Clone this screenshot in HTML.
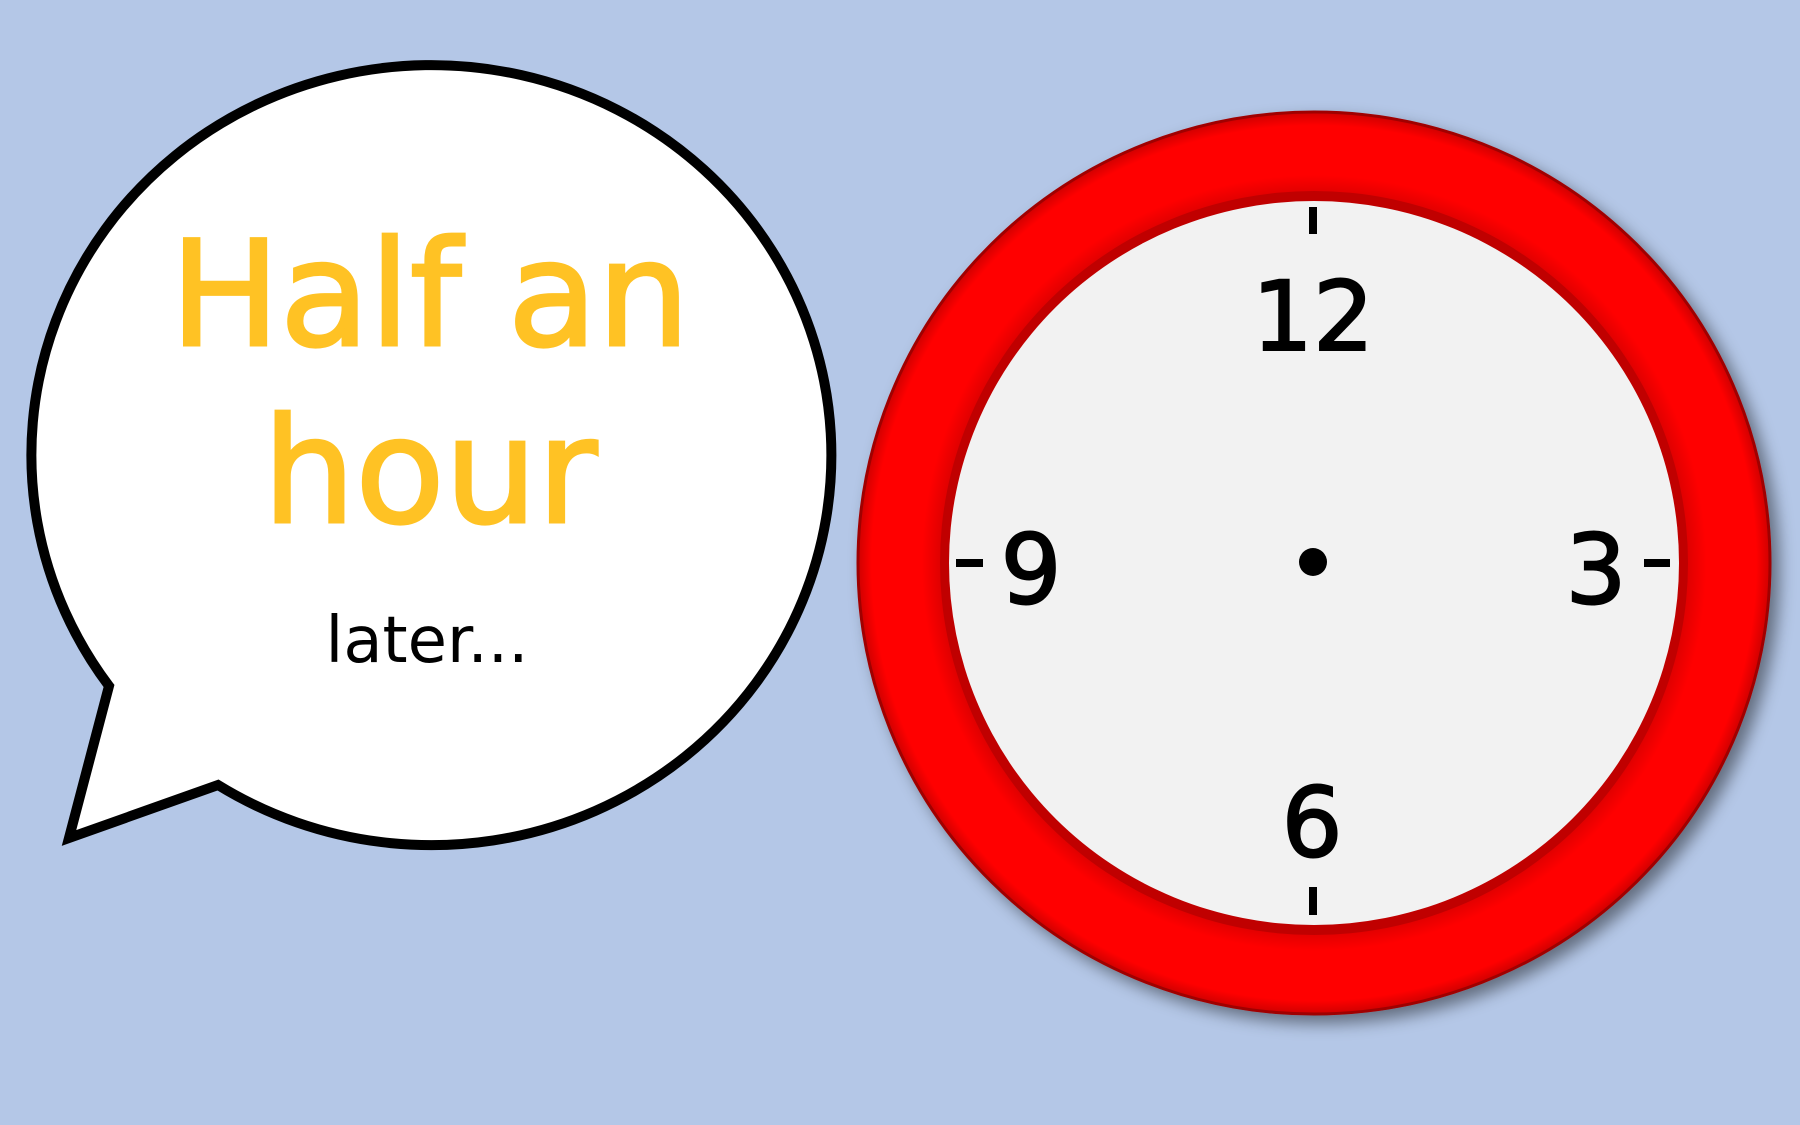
<!DOCTYPE html>
<html><head><meta charset="utf-8"><style>
html,body{margin:0;padding:0;background:#b4c7e7;width:1800px;height:1125px;overflow:hidden}
svg{display:block}
</style></head><body>
<svg width="1800" height="1125" viewBox="0 0 1800 1125">
<defs>
<filter id="sh" x="-10%" y="-10%" width="130%" height="130%"><feDropShadow dx="8" dy="8" stdDeviation="8" flood-color="#000" flood-opacity="0.45"/></filter>
<radialGradient id="rg" cx="50%" cy="50%" r="50%">
<stop offset="82%" stop-color="#e00000"/><stop offset="86%" stop-color="#ff0505"/><stop offset="97%" stop-color="#ff0000"/><stop offset="100%" stop-color="#d00000"/>
</radialGradient>
</defs>
<path d="M109,686 L69,838 L218,785 A400,390 0 1 0 109,686 Z" fill="#fff" stroke="#000" stroke-width="10" stroke-linejoin="miter"/>
<g font-family="'Comic Sans MS','DejaVu Sans',sans-serif" text-anchor="middle">
<text x="430" y="345" font-size="146" fill="#ffc224" stroke="#ffc224" stroke-width="3">Half an</text>
<text x="430" y="522" font-size="146" fill="#ffc224" stroke="#ffc224" stroke-width="3">hour</text>
<text x="427" y="662" font-size="64" fill="#000">later...</text>
</g>
<ellipse cx="1314" cy="563" rx="456" ry="451" fill="url(#rg)" stroke="#a00000" stroke-width="3" filter="url(#sh)"/>
<ellipse cx="1314" cy="563" rx="374" ry="372" fill="#c00000"/>
<ellipse cx="1314" cy="563" rx="365" ry="362" fill="#f2f2f2"/>
<g stroke="#000" stroke-width="8">
<line x1="1313" y1="207" x2="1313" y2="234"/>
<line x1="1313" y1="887" x2="1313" y2="915"/>
<line x1="956" y1="563" x2="983" y2="563"/>
<line x1="1644" y1="563" x2="1670" y2="563"/>
</g>
<circle cx="1313" cy="562" r="14" fill="#000"/>
<g font-family="'Comic Sans MS','DejaVu Sans',sans-serif" font-size="96" text-anchor="middle" fill="#000" stroke="#000" stroke-width="2">
<text x="1313" y="350">12</text>
<text x="1596" y="603">3</text>
<text x="1312" y="856">6</text>
<text x="1031" y="603">9</text>
</g>
</svg>
</body></html>
